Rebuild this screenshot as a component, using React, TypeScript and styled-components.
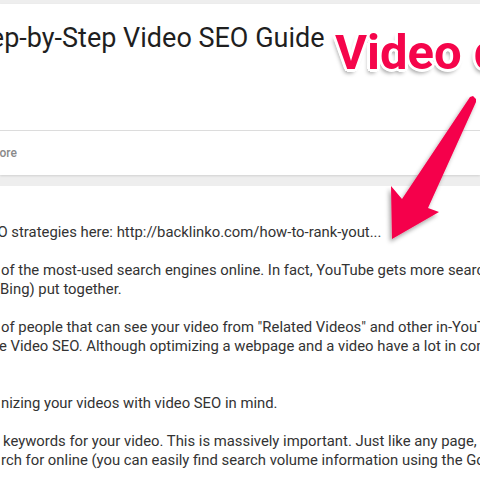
import styled, { createGlobalStyle } from 'styled-components';

const GlobalStyle = createGlobalStyle`
  html, body {
    margin: 0;
    padding: 0;
    background: #eeeeee;
    overflow: hidden;
  }
  #root {
    width: 480px;
    height: 486px;
  }
`;

const Page = styled.div`
  position: relative;
  width: 480px;
  height: 486px;
  padding-top: 4px;
  box-sizing: border-box;
  display: flex;
  flex-direction: column;
  gap: 11px;
  overflow: hidden;
  font-family: Roboto, 'Liberation Sans', Arial, sans-serif;
`;

const InfoCard = styled.section`
  background: #fff;
  height: 171px;
  display: flex;
  flex-direction: column;
  box-shadow: 0 1px 2px rgba(0, 0, 0, 0.12);
`;

const TitleArea = styled.div`
  height: 127px;
  padding-top: 18px;
  box-sizing: border-box;
  border-bottom: 1px solid #dcdcdc;
  overflow: hidden;
`;

const Title = styled.h1`
  margin: 0 0 0 -35px;
  font-size: 27px;
  font-weight: 400;
  color: #1f1f1f;
  white-space: nowrap;
`;

const MoreRow = styled.div`
  flex: 1;
  display: flex;
  align-items: center;
  overflow: hidden;
`;

const More = styled.span`
  margin-left: -11px;
  font-size: 12px;
  font-weight: 500;
  color: #8a8a8a;
`;

const DescCard = styled.section`
  flex: 1;
  background: #fff;
  padding-top: 37px;
  overflow: hidden;
`;

const Line = styled.div<{ shift?: number }>`
  height: 19px;
  line-height: 19px;
  margin-left: ${(p) => p.shift ?? 0}px;
  font-size: 14.85px;
  color: #333;
  white-space: nowrap;
`;

const Callout = styled.div`
  position: absolute;
  left: 335px;
  top: 24px;
  font-family: Roboto, 'Liberation Sans', Arial, sans-serif;
  font-size: 49px;
  font-weight: 700;
  color: #f5054b;
  white-space: nowrap;
  text-shadow:
    -2px -2px 0 #fff, 2px -2px 0 #fff, -2px 2px 0 #fff, 2px 2px 0 #fff,
    0 -3px 0 #fff, 0 3px 0 #fff, -3px 0 0 #fff, 3px 0 0 #fff,
    -2px 4px 4px rgba(0, 0, 0, 0.4);
`;

const ArrowLayer = styled.svg`
  position: absolute;
  left: 0;
  top: 0;
  pointer-events: none;
`;

const lines: { text: string; shift?: number }[] = [
  { text: 'EO strategies here: http://backlinko.com/how-to-rank-yout...', shift: -11 },
  { text: '' },
  { text: 'of the most-used search engines online. In fact, YouTube gets more searches', shift: 1 },
  { text: '(Bing) put together.', shift: -5 },
  { text: '' },
  { text: 'of people that can see your video from "Related Videos" and other in-YouTube', shift: 1 },
  { text: 'e Video SEO. Although optimizing a webpage and a video have a lot in common', shift: -1 },
  { text: '' },
  { text: '' },
  { text: 'nizing your videos with video SEO in mind.', shift: 1 },
  { text: '' },
  { text: 'keywords for your video. This is massively important. Just like any page, you', shift: 3 },
  { text: 'rch for online (you can easily find search volume information using the Google', shift: 1 },
];

export default function App(): JSX.Element {
  return (
    <>
      <GlobalStyle />
      <Page>
        <InfoCard>
          <TitleArea>
            <Title>Step-by-Step Video SEO Guide</Title>
          </TitleArea>
          <MoreRow>
            <More>more</More>
          </MoreRow>
        </InfoCard>
        <DescCard>
          {lines.map((l, i) => (
            <Line key={i} shift={l.shift}>
              {l.text}
            </Line>
          ))}
        </DescCard>
        <Callout>Video description</Callout>
        <ArrowLayer width="480" height="486" viewBox="0 0 480 486">
          <defs>
            <filter id="arrowShadow" x="-20%" y="-20%" width="140%" height="140%">
              <feDropShadow dx="-2" dy="3" stdDeviation="2" floodColor="#000" floodOpacity="0.35" />
            </filter>
          </defs>
          <polygon
            points="470,97 473,96 476,99 476,102 428,208 439,212 392,239 391,186 402,199"
            fill="#f5054b"
            filter="url(#arrowShadow)"
          />
        </ArrowLayer>
      </Page>
    </>
  );
}
